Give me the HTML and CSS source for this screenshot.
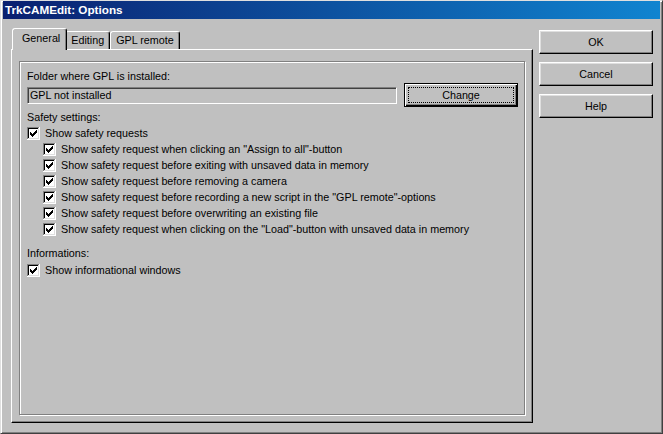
FILE: index.html
```html
<!DOCTYPE html>
<html lang="en">
<head>
    <meta charset="UTF-8">
    <title>TrkCAMEdit: Options</title>
    <link rel="stylesheet" href="styles.css">
</head>
<body>

    <svg class="defs" width="0" height="0">
        <symbol id="chk" viewBox="0 0 13 13">
            <rect width="13" height="13" fill="#fff"/>
            <path d="M0 0h12v1H1v11H0z" fill="#808080"/>
            <path d="M1 1h10v1H2v9H1z" fill="#000"/>
            <path d="M11 1h1v11H1v-1h10z" fill="#dfdfdf"/>
            <path d="M12 0h1v13H0v-1h12z" fill="#fff"/>
            <path d="M3 5h1v3h-1zM4 6h1v3h-1zM5 7h1v3h-1zM6 6h1v3h-1zM7 5h1v3h-1zM8 4h1v3h-1zM9 3h1v3h-1z" fill="#000"/>
        </symbol>
    </svg>

    <div class="window">
        <div class="titlebar">TrkCAMEdit: Options</div>

        <div class="content">
            <div class="tabs">
                <div class="tabstrip">
                    <div class="tab active">General</div>
                    <div class="tab">Editing</div>
                    <div class="tab">GPL remote</div>
                </div>
                <div class="panel">
                    <div class="group">
                        <div class="label">Folder where GPL is installed:</div>
                        <div class="folder-row">
                            <div class="field">GPL not installed</div>
                            <div class="btn default">Change</div>
                        </div>

                        <div class="label section">Safety settings:</div>
                        <div class="check"><svg><use href="#chk"/></svg>Show safety requests</div>
                        <div class="check sub"><svg><use href="#chk"/></svg>Show safety request when clicking an "Assign to all"-button</div>
                        <div class="check sub"><svg><use href="#chk"/></svg>Show safety request before exiting with unsaved data in memory</div>
                        <div class="check sub"><svg><use href="#chk"/></svg>Show safety request before removing a camera</div>
                        <div class="check sub"><svg><use href="#chk"/></svg>Show safety request before recording a new script in the "GPL remote"-options</div>
                        <div class="check sub"><svg><use href="#chk"/></svg>Show safety request before overwriting an existing file</div>
                        <div class="check sub"><svg><use href="#chk"/></svg>Show safety request when clicking on the "Load"-button with unsaved data in memory</div>

                        <div class="label info">Informations:</div>
                        <div class="check"><svg><use href="#chk"/></svg>Show informational windows</div>
                    </div>
                </div>
            </div>

            <div class="buttons">
                <div class="btn">OK</div>
                <div class="btn">Cancel</div>
                <div class="btn">Help</div>
            </div>
        </div>
    </div>

</body>
</html>
```

FILE: styles.css
```css
body {
    margin: 0;
    background-color: #c0c0c0;
    font-family: "Liberation Sans", Arial, sans-serif;
    font-size: 10.75px;
    color: #000;
}

.defs {
    position: absolute;
}

.window {
    width: 663px;
    height: 434px;
    box-sizing: border-box;
    border: 1px solid;
    border-color: #dfdfdf #404040 #404040 #dfdfdf;
    box-shadow: inset 1px 1px #fff, inset -1px -1px #808080;
    padding: 0 2px 2px 2px;
    background-color: #c0c0c0;
}

.titlebar {
    height: 18px;
    line-height: 18px;
    padding-left: 2px;
    background: linear-gradient(to right, #0a2070, #1084d0);
    color: #fff;
    font-weight: bold;
    font-size: 11.7px;
}

.content {
    display: flex;
    gap: 6px;
    padding-left: 8px;
}

.tabs {
    width: 522px;
}

.tabstrip {
    display: flex;
    align-items: flex-end;
    height: 21px;
    margin-top: 9px;
    padding-left: 3px;
}

.tab {
    height: 17px;
    line-height: 17px;
    padding: 0 5px;
    border: 1px solid;
    border-bottom: 0;
    border-color: #fff #000 transparent #fff;
    border-radius: 3px 3px 0 0;
    box-shadow: inset -1px 0 #808080;
    background-color: #c0c0c0;
}

.tab.active {
    position: relative;
    z-index: 1;
    height: 21px;
    line-height: 19px;
    margin: 0 -2px -1px -2px;
    padding: 0 6px 0 9px;
}

.panel {
    height: 374px;
    box-sizing: border-box;
    border: 1px solid;
    border-color: #fff #000 #000 #fff;
    box-shadow: inset -1px -1px #808080;
    padding: 11px 7px 7px 7px;
}

.group {
    height: 100%;
    box-sizing: border-box;
    border: 1px solid #808080;
    box-shadow: inset 1px 1px #fff, 1px 1px #fff;
    padding: 8px 6px 0 7px;
}

.label {
    height: 13px;
    line-height: 13px;
}

.label.section {
    margin-top: 4px;
}

.label.info {
    margin-top: 10px;
}

.folder-row {
    display: flex;
    align-items: center;
    gap: 7px;
    height: 24px;
}

.field {
    flex: 1;
    height: 17px;
    line-height: 15px;
    box-sizing: border-box;
    border: 1px solid;
    border-color: #808080 #fff #fff #808080;
    box-shadow: inset 1px 1px #404040;
    padding-left: 2px;
}

.btn {
    width: 114px;
    height: 24px;
    box-sizing: border-box;
    display: flex;
    justify-content: center;
    align-items: center;
    border: 1px solid;
    border-color: #fff #000 #000 #fff;
    box-shadow: inset -1px -1px #808080, inset 1px 1px #dfdfdf;
}

.btn.default {
    border: 1px solid #000;
    box-shadow: inset 1px 1px #fff, inset -1px -1px #000, inset -2px -2px #808080;
    outline: 1px dotted #000;
    outline-offset: -5px;
}

.buttons {
    display: flex;
    flex-direction: column;
    gap: 8px;
    margin-top: 11px;
}

.check {
    display: flex;
    align-items: center;
    gap: 5px;
    height: 16px;
}

.check svg {
    width: 13px;
    height: 13px;
    flex-shrink: 0;
}

.check.sub {
    padding-left: 16px;
}

.label + .check {
    margin-top: 1px;
}

.label.info + .check {
    margin-top: 2px;
}
```
